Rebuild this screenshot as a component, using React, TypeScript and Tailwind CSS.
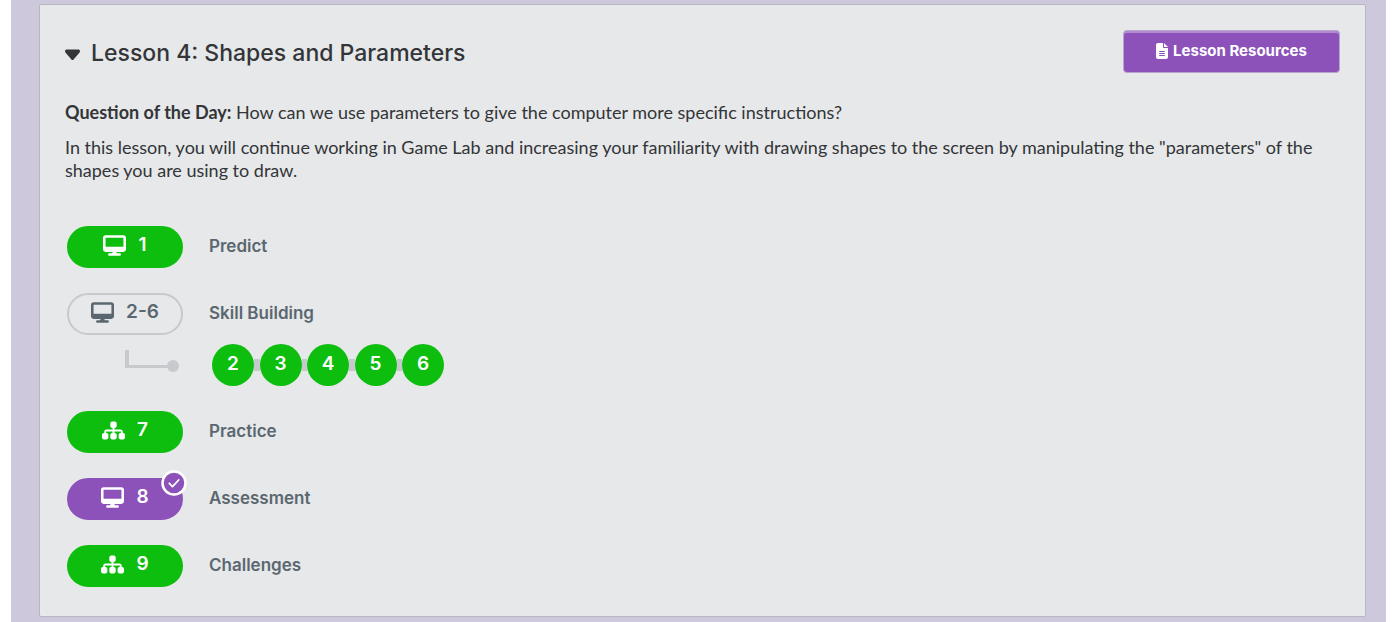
import { useState } from "react";
import type { ReactNode } from "react";
import { FaCaretDown, FaCaretRight, FaDesktop, FaFileLines, FaSitemap } from "react-icons/fa6";

type Status = "perfect" | "group" | "submitted";

const pillStyles: Record<Status, string> = {
  perfect: "border-[#0ebe0e] bg-[#0ebe0e] text-white",
  group: "border-[#c6cacd] text-[#5b6770]",
  submitted: "border-[#8c52ba] bg-[#8c52ba] text-white",
};

function AssessmentBadge() {
  return (
    <svg viewBox="0 0 26 26" className="absolute -top-2.5 -right-1.5 size-[26px]" aria-label="Assessment level">
      <circle cx="13" cy="13" r="11.5" fill="#8c52ba" stroke="#fff" strokeWidth="2.5" />
      <path d="M8.3 13.3l3.2 3.3 6.2-6.6" fill="none" stroke="#fff" strokeWidth="1.8" strokeLinecap="round" strokeLinejoin="round" />
    </svg>
  );
}

function Level({
  label,
  title,
  icon,
  status = "perfect",
  assessment = false,
}: {
  label: string;
  title: string;
  icon: "desktop" | "map";
  status?: Status;
  assessment?: boolean;
}) {
  const Icon = icon === "desktop" ? FaDesktop : FaSitemap;
  return (
    <a href="#level" className="flex items-center gap-[26px] font-['Inter',sans-serif]">
      <span
        className={`relative flex h-[42px] w-[116px] items-center justify-center gap-3 rounded-full border-2 pb-1 text-[19px] leading-6 font-semibold ${pillStyles[status]}`}
      >
        <Icon className="size-[23px]" />
        {label}
        {assessment && <AssessmentBadge />}
      </span>
      <span className="pb-0.5 text-[17px] leading-6 font-semibold text-[#5b6770]">{title}</span>
    </a>
  );
}

function Bubbles({ levels }: { levels: number[] }) {
  const items: ReactNode[] = [];
  levels.forEach((n, i) => {
    if (i > 0) items.push(<span key={`line-${n}`} className="h-3 flex-1 bg-[#c6cacd]" />);
    items.push(
      <a
        key={n}
        href="#level"
        className="flex size-[42px] items-center justify-center rounded-full bg-[#0ebe0e] pb-0.5 font-['Inter',sans-serif] text-[19px] leading-6 font-semibold text-white"
      >
        {n}
      </a>,
    );
  });
  return (
    <div className="mt-[9px] flex items-center pl-[58px]">
      <svg viewBox="0 0 55 30" className="mr-8 h-[30px] w-[55px]" aria-hidden="true">
        <path d="M0 0h4v15h44v3H0z" fill="#c6cacd" />
        <circle cx="48" cy="16" r="6" fill="#c6cacd" />
      </svg>
      <div className="flex w-[232px] items-center">{items}</div>
    </div>
  );
}

export default function App() {
  const [open, setOpen] = useState(true);
  return (
    <div className="bg-white px-[11px] font-['Lato','Open_Sans',sans-serif] text-[#333538]">
      <main className="bg-[#cec8dc] pt-1 pr-5 pb-1.5 pl-7">
        <section className="rounded-xs border border-[#b7b7c2] bg-[#e6e8e9] px-[25px] pt-[25px] pb-[29px]">
          <header className="flex items-start justify-between font-['Inter',sans-serif]">
            <h2 className="pt-[7px] text-[23px] leading-8 font-medium">
              <button type="button" aria-expanded={open} onClick={() => setOpen(!open)} className="flex items-center gap-[11px]">
                {open ? (
                  <FaCaretDown preserveAspectRatio="none" className="h-7 w-[15px]" />
                ) : (
                  <FaCaretRight className="w-[15px]" />
                )}
                Lesson 4: Shapes and Parameters
              </button>
            </h2>
            <button
              type="button"
              className="flex h-[43px] w-[217px] items-center justify-center gap-[5px] rounded-sm border border-[#b8a5cb] bg-[#8c52ba] pb-0.5 text-[15px] leading-5 font-bold text-white shadow-[inset_0_2px_0_#b28ad0]"
            >
              <FaFileLines className="h-4 w-3" />
              Lesson Resources
            </button>
          </header>
          {open && (
            <>
              <div className="pt-7 text-lg leading-[23px]">
                <p>
                  <strong className="font-bold">Question of the Day:</strong> How can we use parameters to give the
                  computer more specific instructions?
                </p>
                <p className="pt-3">
                  In this lesson, you will continue working in Game Lab and increasing your familiarity with drawing
                  shapes to the screen by manipulating the "parameters" of the shapes you are using to draw.
                </p>
              </div>
              <ul className="flex flex-col gap-[25px] pt-11 pl-0.5">
                <li>
                  <Level label="1" title="Predict" icon="desktop" />
                </li>
                <li>
                  <Level label="2-6" title="Skill Building" icon="desktop" status="group" />
                  <Bubbles levels={[2, 3, 4, 5, 6]} />
                </li>
                <li>
                  <Level label="7" title="Practice" icon="map" />
                </li>
                <li>
                  <Level label="8" title="Assessment" icon="desktop" status="submitted" assessment />
                </li>
                <li>
                  <Level label="9" title="Challenges" icon="map" />
                </li>
              </ul>
            </>
          )}
        </section>
      </main>
    </div>
  );
}
